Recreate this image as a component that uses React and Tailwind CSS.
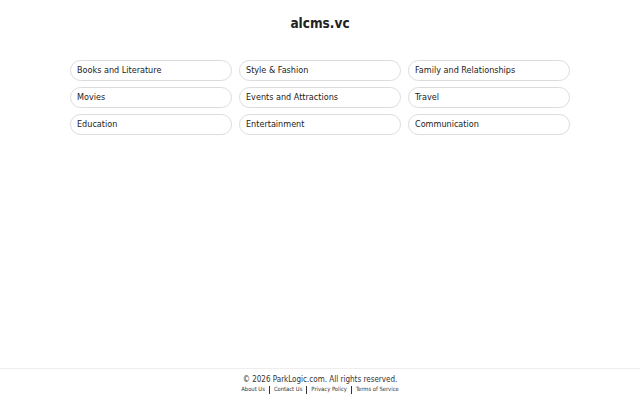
const categories = [
  "Books and Literature",
  "Style & Fashion",
  "Family and Relationships",
  "Movies",
  "Events and Attractions",
  "Travel",
  "Education",
  "Entertainment",
  "Communication",
];

const links = ["About Us", "Contact Us", "Privacy Policy", "Terms of Service"];

export default function App() {
  return (
    <div
      className="min-h-screen flex flex-col bg-white text-[#222]"
      style={{ fontFamily: '"DejaVu Sans Condensed", "DejaVu Sans", sans-serif' }}
    >
      <header className="pt-[14px] text-center">
        <h1 className="text-[13.5px] font-bold leading-[18px]">alcms.vc</h1>
      </header>

      <main className="flex-1 pt-[28px]">
        <div className="mx-auto w-[500px] grid grid-cols-3 gap-x-[7px] gap-y-[6px]">
          {categories.map((c) => (
            <a
              key={c}
              href="#"
              className="h-[21px] flex items-center px-[6px] rounded-full border border-[#dcdcdc] text-[9px] text-[#222]"
            >
              {c}
            </a>
          ))}
        </div>
      </main>

      <footer className="border-t border-[#eeeeee] pt-[6px] pb-[6px] text-center">
        <p className="text-[8px] leading-[10px] text-[#333]">
          © 2026 ParkLogic.com. All rights reserved.
        </p>
        <div className="flex justify-center items-center text-[5.8px] text-[#333]">
          {links.map((l, i) => (
            <span key={l} className="flex items-center">
              {i > 0 && <span className="mx-[4px] w-px h-[8px] bg-[#333]" />}
              <a href="#">{l}</a>
            </span>
          ))}
        </div>
      </footer>
    </div>
  );
}
